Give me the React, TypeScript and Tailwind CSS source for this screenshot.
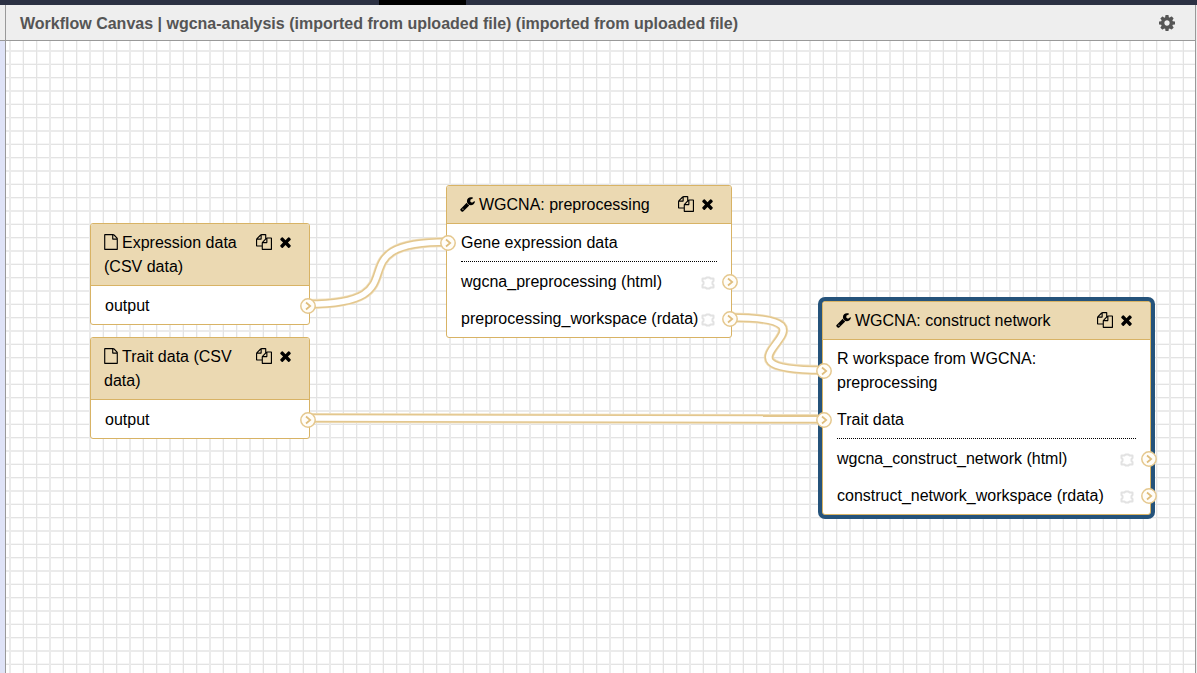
import type { ReactNode } from "react";

const ICONS = {
  file: {
    viewBox: "128 0 1536 1792",
    d: "M1596 380q28 28 48 76t20 88v1152q0 40-28 68t-68 28h-1344q-40 0-68-28t-28-68v-1600q0-40 28-68t68-28h896q40 0 88 20t76 48zm-444-244v376h376q-10-29-22-41l-313-313q-12-12-41-22zm384 1528v-1024h-416q-40 0-68-28t-28-68v-416h-768v1536h1280z",
  },
  wrench: {
    viewBox: "64 0 1664 1792",
    d: "M448 1472q0-26-19-45t-45-19-45 19-19 45 19 45 45 19 45-19 19-45zm644-420l-682 682q-37 37-90 37-52 0-91-37l-106-108q-38-36-38-90 0-53 38-91l681-681q39 98 114.500 173.500t173.500 114.500zm634-435q0 39-23 106-47 134-164.500 217.500t-258.500 83.500q-185 0-316.500-131.500t-131.500-316.500 131.500-316.500 316.500-131.500q58 0 121.500 16.500t107.500 46.500q16 11 16 28t-16 28l-293 169v224l193 107q5-3 79-48.500t135.500-81 70.500-35.500q15 0 23.500 10t8.500 25z",
  },
  copy: {
    viewBox: "0 0 1792 1792",
    d: "M1696 384q40 0 68 28t28 68v1216q0 40-28 68t-68 28h-960q-40 0-68-28t-28-68v-288h-544q-40 0-68-28t-28-68v-672q0-40 20-88t48-76l408-408q28-28 76-48t88-20h416q40 0 68 28t28 68v328q68-40 128-40h416zm-544 213l-299 299h299v-299zm-640-384l-299 299h299v-299zm196 647l316-316v-416h-384v416q0 40-28 68t-68 28h-416v640h512v-256q0-40 20-88t48-76zm956 804v-1152h-384v416q0 40-28 68t-68 28h-416v640h896z",
  },
  times: {
    viewBox: "192 0 1408 1792",
    d: "M1490 1322q0 40-28 68l-136 136q-28 28-68 28t-68-28l-294-294-294 294q-28 28-68 28t-68-28l-136-136q-28-28-28-68t28-68l294-294-294-294q-28-28-28-68t28-68l136-136q28-28 68-28t68 28l294 294 294-294q28-28 68-28t68 28l136 136q28 28 28 68t-28 68l-294 294 294 294q28 28 28 68z",
  },
  cog: {
    viewBox: "128 128 1536 1536",
    d: "M1152 896q0-106-75-181t-181-75-181 75-75 181 75 181 181 75 181-75 75-181zm512-109v222q0 12-8 23t-20 13l-185 28q-19 54-39 91 35 50 107 138 10 12 10 25t-9 23q-27 37-99 108t-94 71q-12 0-26-9l-138-108q-44 23-91 38-16 136-29 186-7 28-36 28h-222q-14 0-24.500-8.500t-11.500-21.500l-28-184q-49-16-90-37l-141 107q-10 9-25 9-14 0-25-11-126-114-165-168-7-10-7-23 0-12 8-23 15-21 51-66.500t54-70.500q-27-50-41-99l-183-27q-13-2-21-12.500t-8-23.500v-222q0-12 8-23t19-13l186-28q14-46 39-92-40-57-107-138-10-12-10-24 0-10 9-23 26-36 98.500-107.500t94.500-71.500q13 0 26 10l138 107q44-23 91-38 16-136 29-186 7-28 36-28h222q14 0 24.500 8.500t11.500 21.500l28 184q49 16 90 37l142-107q9-9 24-9 13 0 25 10 129 119 165 170 7 8 7 22 0 12-8 23-15 21-51 66.500t-54 70.500q26 50 41 98l183 28q13 2 21 12.500t8 23.500z",
  },
};

function Icon({ name, className }: { name: keyof typeof ICONS; className: string }) {
  return (
    <svg viewBox={ICONS[name].viewBox} fill="currentColor" aria-hidden="true" className={className}>
      <path d={ICONS[name].d} />
    </svg>
  );
}

function Port({ side }: { side: "left" | "right" }) {
  return (
    <svg
      viewBox="0 0 16 16"
      aria-hidden="true"
      className={`absolute top-1/2 size-4 -translate-y-1/2 ${side === "left" ? "-left-[7px]" : "-right-[7px]"}`}
    >
      <circle cx="8" cy="8" r="7.2" fill="#fffdf8" stroke="#e5c88f" strokeWidth="1.5" />
      <path d="M6 4.500L10.200 8L6 11.500" fill="none" stroke="#dfbd7c" strokeWidth="1.700" />
    </svg>
  );
}

function OutputMark() {
  return (
    <svg viewBox="0 0 14 14" fill="none" aria-hidden="true" className="mt-0.5 size-3.5">
      <path
        d="M1.500 2.500L4.500 2.500L5.500 1.500H8.500L9.500 2.500L12.500 2.500V5L11.500 6V8L12.500 9V11.500L9.500 11.500L8.500 12.500H5.500L4.500 11.500L1.500 11.500V9L2.500 8V6L1.500 5z"
        stroke="#e2e2e2"
        strokeWidth="2"
        strokeLinejoin="round"
      />
    </svg>
  );
}

function InputRow({ children }: { children: ReactNode }) {
  return (
    <li className="relative px-3.5 pt-[7px] pb-1.5">
      <Port side="left" />
      {children}
    </li>
  );
}

function OutputRow({ children, marked = true }: { children: ReactNode; marked?: boolean }) {
  return (
    <li className="relative flex items-center justify-between pt-[7px] pr-4 pb-1.5 pl-3.5 whitespace-nowrap">
      <span>{children}</span>
      {marked && <OutputMark />}
      <Port side="right" />
    </li>
  );
}

type NodeProps = {
  title: string;
  icon: "file" | "wrench";
  place: string;
  selected?: boolean;
  inputs?: string[];
  outputs: string[];
};

function WorkflowNode({ title, icon, place, selected = false, inputs = [], outputs }: NodeProps) {
  return (
    <article
      className={`absolute rounded-[3px] border border-[#d8b365] bg-white ${place} ${
        selected ? "ring-4 ring-[#25537b]" : ""
      }`}
    >
      <header className="flex items-start rounded-t-[2px] border-b border-[#d8b365] bg-[#ebd9b2] pt-[7px] pr-[17px] pb-1.5 pl-[13px]">
        <h2 className="flex-1">
          <Icon
            name={icon}
            className={`mr-1 inline-block h-4 align-[-2px] ${icon === "file" ? "w-3.5" : "w-[15px]"}`}
          />
          {title}
        </h2>
        <div className="flex gap-[7px] pt-[3px]">
          <button type="button" aria-label={`Duplicate ${title}`}>
            <Icon name="copy" className="block size-4" />
          </button>
          <button type="button" aria-label={`Remove ${title}`}>
            <Icon name="times" className="block h-4 w-[13px]" />
          </button>
        </div>
      </header>
      {inputs.length > 0 && (
        <>
          <ul>
            {inputs.map((label) => (
              <InputRow key={label}>{label}</InputRow>
            ))}
          </ul>
          <div className="mx-3.5 border-t border-dotted border-black" />
        </>
      )}
      <ul className="pt-px">
        {outputs.map((label) => (
          <OutputRow key={label} marked={inputs.length > 0}>
            {label}
          </OutputRow>
        ))}
      </ul>
    </article>
  );
}

const CONNECTIONS = [
  "M302 263C422 263 322 201 442 201",
  "M723 276.500C857 276.500 683 329 817 329",
  "M302 377L818 378",
];

function Connections() {
  return (
    <svg aria-hidden="true" fill="none" className="absolute inset-0 size-full">
      {CONNECTIONS.map((d) => (
        <g key={d}>
          <path d={d} stroke="#f0dfbc" strokeWidth="10" />
          <path d={d} stroke="#e3c78e" strokeWidth="8.500" />
          <path d={d} stroke="#ffffff" strokeWidth="5.500" />
        </g>
      ))}
    </svg>
  );
}

export default function App() {
  return (
    <div className="flex min-h-screen flex-col bg-white font-['Liberation_Sans',Arial,sans-serif] text-base text-black">
      <div className="grid h-[5px] grid-cols-[379fr_87fr_731fr] bg-[#2c3143]">
        <span className="col-start-2 bg-black" />
      </div>
      <div className="flex flex-1">
        <aside className="flex w-[5px] flex-col bg-[#dfe3f7]">
          <div className="h-9 border-b border-[#999] bg-[#eee]" />
        </aside>
        <main className="flex min-w-0 flex-1 flex-col border-x border-[#999]">
          <header className="flex h-9 items-center justify-between border-b border-[#999] bg-[#eee] pr-5 pl-3.5 text-[#555]">
            <h1 className="pt-0.5 font-bold">
              Workflow Canvas | wgcna-analysis (imported from uploaded file) (imported from uploaded file)
            </h1>
            <button type="button" aria-label="Workflow options">
              <Icon name="cog" className="block size-4" />
            </button>
          </header>
          <section
            aria-label="Workflow"
            className="relative flex-1 overflow-hidden bg-[linear-gradient(90deg,#ebebeb_2px,transparent_2px_14px,#e3e3e3_14px_15px,transparent_15px_27px,#e3e3e3_27px_28px,transparent_28px),linear-gradient(180deg,#ebebeb_2px,transparent_2px_14px,#e3e3e3_14px_15px,transparent_15px_27px,#e3e3e3_27px_28px,transparent_28px),linear-gradient(90deg,transparent_13px,#f6f6f6_13px_14px,transparent_14px_28px,#f6f6f6_28px_29px,transparent_29px),linear-gradient(180deg,transparent_13px,#f6f6f6_13px_14px,transparent_14px_28px,#f6f6f6_28px_29px,transparent_29px)] bg-[length:40px_40px] bg-[position:3px_9px]"
          >
            <Connections />
            <WorkflowNode
              title="Expression data (CSV data)"
              icon="file"
              place="left-[84px] top-[182px] w-[220px]"
              outputs={["output"]}
            />
            <WorkflowNode
              title="Trait data (CSV data)"
              icon="file"
              place="left-[84px] top-[296px] w-[220px]"
              outputs={["output"]}
            />
            <WorkflowNode
              title="WGCNA: preprocessing"
              icon="wrench"
              place="left-[440px] top-[144px] w-[286px]"
              inputs={["Gene expression data"]}
              outputs={["wgcna_preprocessing (html)", "preprocessing_workspace (rdata)"]}
            />
            <WorkflowNode
              title="WGCNA: construct network"
              icon="wrench"
              place="left-[816px] top-[260px] w-[329px]"
              selected
              inputs={["R workspace from WGCNA: preprocessing", "Trait data"]}
              outputs={["wgcna_construct_network (html)", "construct_network_workspace (rdata)"]}
            />
          </section>
        </main>
        <div className="w-px bg-[#eee]" />
      </div>
    </div>
  );
}
